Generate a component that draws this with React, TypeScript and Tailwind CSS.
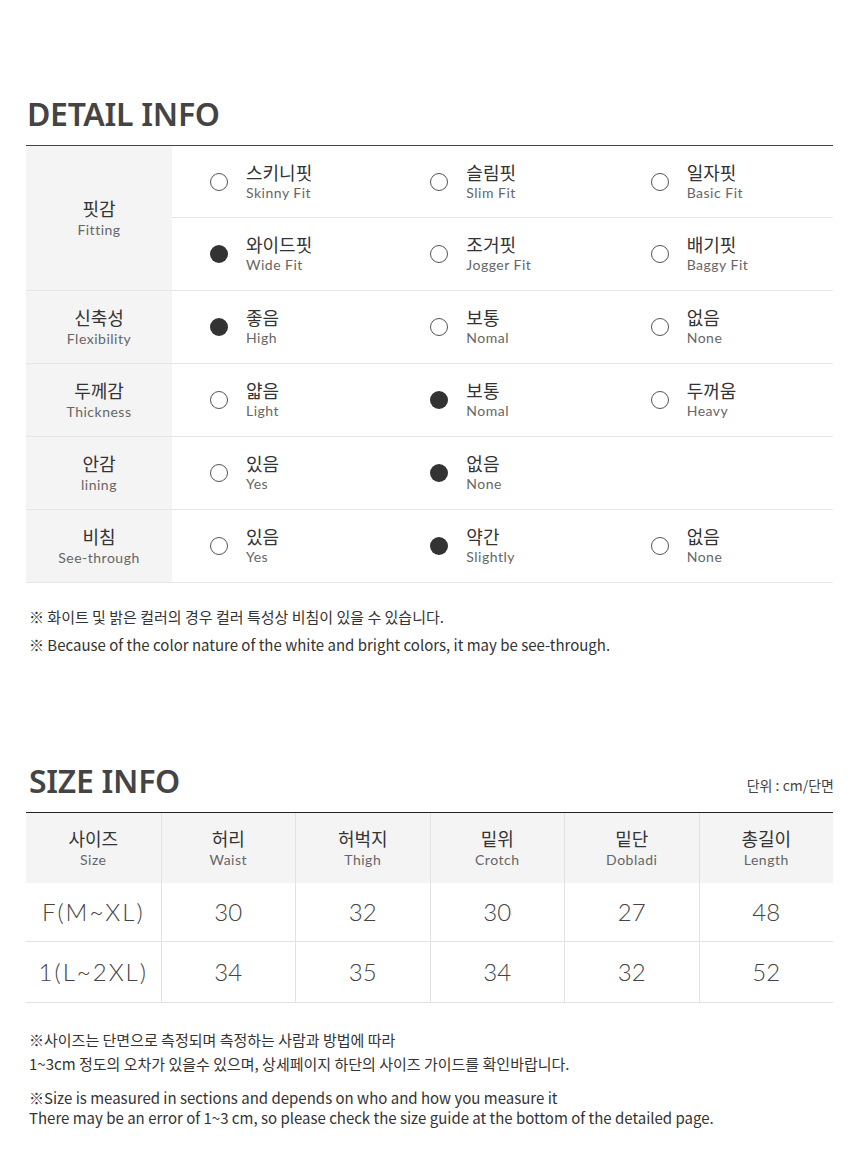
import React from 'react';

const KR = "font-['Noto_Sans_CJK_KR',sans-serif]";
const EN = "font-['Lato','Noto_Sans_CJK_KR',sans-serif]";

type Opt = { ko: string; en: string; on: boolean } | null;

const detailRows: { ko: string; en: string; lines: Opt[][] }[] = [
  {
    ko: '핏감', en: 'Fitting',
    lines: [
      [{ ko: '스키니핏', en: 'Skinny Fit', on: false }, { ko: '슬림핏', en: 'Slim Fit', on: false }, { ko: '일자핏', en: 'Basic Fit', on: false }],
      [{ ko: '와이드핏', en: 'Wide Fit', on: true }, { ko: '조거핏', en: 'Jogger Fit', on: false }, { ko: '배기핏', en: 'Baggy Fit', on: false }],
    ],
  },
  {
    ko: '신축성', en: 'Flexibility',
    lines: [[{ ko: '좋음', en: 'High', on: true }, { ko: '보통', en: 'Nomal', on: false }, { ko: '없음', en: 'None', on: false }]],
  },
  {
    ko: '두께감', en: 'Thickness',
    lines: [[{ ko: '얇음', en: 'Light', on: false }, { ko: '보통', en: 'Nomal', on: true }, { ko: '두꺼움', en: 'Heavy', on: false }]],
  },
  {
    ko: '안감', en: 'lining',
    lines: [[{ ko: '있음', en: 'Yes', on: false }, { ko: '없음', en: 'None', on: true }, null]],
  },
  {
    ko: '비침', en: 'See-through',
    lines: [[{ ko: '있음', en: 'Yes', on: false }, { ko: '약간', en: 'Slightly', on: true }, { ko: '없음', en: 'None', on: false }]],
  },
];

const sizeHead = [
  { ko: '사이즈', en: 'Size' }, { ko: '허리', en: 'Waist' }, { ko: '허벅지', en: 'Thigh' },
  { ko: '밑위', en: 'Crotch' }, { ko: '밑단', en: 'Dobladi' }, { ko: '총길이', en: 'Length' },
];

const sizeRows = [
  { h: 'h-[59px]', cells: ['F(M~XL)', '30', '32', '30', '27', '48'] },
  { h: 'h-[61px]', cells: ['1(L~2XL)', '34', '35', '34', '32', '52'] },
];

const Radio = ({ on }: { on: boolean }) =>
  on ? (
    <span className="block w-[18px] h-[18px] rounded-full bg-[#333] shrink-0" />
  ) : (
    <span className="block w-[18px] h-[18px] rounded-full border border-[#555] bg-white shrink-0" />
  );

const Option = ({ o }: { o: Opt }) => {
  if (!o) return <div />;
  return (
    <div className="flex items-center pl-[38px]">
      <Radio on={o.on} />
      <div className="ml-[18px] flex flex-col">
        <span className={`${KR} text-[18px] leading-[22px] text-[#333]`}>{o.ko}</span>
        <span className={`${EN} text-[14px] leading-[20px] tracking-[0.5px] text-[#666]`}>{o.en}</span>
      </div>
    </div>
  );
};

const App: React.FC = () => {
  return (
    <div className="w-[860px] min-h-[1176px] bg-white pt-[94px] px-[26px] pb-[40px]">
      <h2 className="font-['Noto_Sans',sans-serif] font-semibold text-[32px] leading-[40px] tracking-[-0.3px] text-[#444] pl-[1px]">
        DETAIL INFO
      </h2>

      <div className="mt-[11px] border-t border-[#444] w-[807px]">
        {detailRows.map((r) => (
          <div key={r.ko} className="flex border-b border-[#e6e6e6]">
            <div className="w-[146px] bg-[#f4f4f4] flex flex-col items-center justify-center shrink-0">
              <span className={`${KR} text-[18px] leading-[24px] text-[#333]`}>{r.ko}</span>
              <span className={`${EN} text-[14px] leading-[20px] tracking-[0.5px] text-[#666]`}>{r.en}</span>
            </div>
            <div className="flex-1 flex flex-col">
              {r.lines.map((line, i) => (
                <div
                  key={i}
                  className={`grid grid-cols-3 h-[72px] ${i < r.lines.length - 1 ? 'border-b border-[#e6e6e6]' : ''}`}
                >
                  {line.map((o, j) => (
                    <Option key={j} o={o} />
                  ))}
                </div>
              ))}
            </div>
          </div>
        ))}
      </div>

      <div className={`${KR} mt-[20px] text-[15px] leading-[28px] text-[#333] pl-[3px]`}>
        <p>※ 화이트 및 밝은 컬러의 경우 컬러 특성상 비침이 있을 수 있습니다.</p>
        <p>※ Because of the color nature of the white and bright colors, it may be see-through.</p>
      </div>

      <div className="mt-[102px] flex items-end justify-between">
        <h2 className="font-['Noto_Sans',sans-serif] font-semibold text-[32px] leading-[40px] tracking-[-0.3px] text-[#444] pl-[3px]">
          SIZE INFO
        </h2>
        <span className={`${KR} text-[14px] leading-[20px] text-[#444] mb-[6px]`}>단위 : cm/단면</span>
      </div>

      <div className="mt-[11px] border-t border-[#222] w-[807px]">
        <div className="grid grid-cols-6 h-[70px] bg-[#f4f4f4]">
          {sizeHead.map((h, i) => (
            <div
              key={h.en}
              className={`flex flex-col items-center justify-center ${i > 0 ? 'border-l border-[#e2e2e2]' : ''}`}
            >
              <span className={`${KR} text-[18px] leading-[24px] text-[#333]`}>{h.ko}</span>
              <span className={`${EN} text-[14px] leading-[20px] tracking-[0.5px] text-[#666]`}>{h.en}</span>
            </div>
          ))}
        </div>
        {sizeRows.map((row) => (
          <div key={row.cells[0]} className={`grid grid-cols-6 ${row.h} border-b border-[#e2e2e2]`}>
            {row.cells.map((c, i) => (
              <div
                key={i}
                className={`flex items-center justify-center ${EN} font-light text-[24px] text-[#444] ${
                  i === 0 ? 'tracking-[2px]' : 'border-l border-[#e2e2e2]'
                }`}
              >
                {c}
              </div>
            ))}
          </div>
        ))}
      </div>

      <div className={`${KR} mt-[25px] text-[15px] leading-[24px] text-[#333] pl-[3px]`}>
        <p>※사이즈는 단면으로 측정되며 측정하는 사람과 방법에 따라</p>
        <p>1~3cm 정도의 오차가 있을수 있으며, 상세페이지 하단의 사이즈 가이드를 확인바랍니다.</p>
        <p className="mt-[12px] leading-[20px]">※Size is measured in sections and depends on who and how you measure it</p>
        <p className="leading-[20px]">There may be an error of 1~3 cm, so please check the size guide at the bottom of the detailed page.</p>
      </div>
    </div>
  );
};

export default App;
